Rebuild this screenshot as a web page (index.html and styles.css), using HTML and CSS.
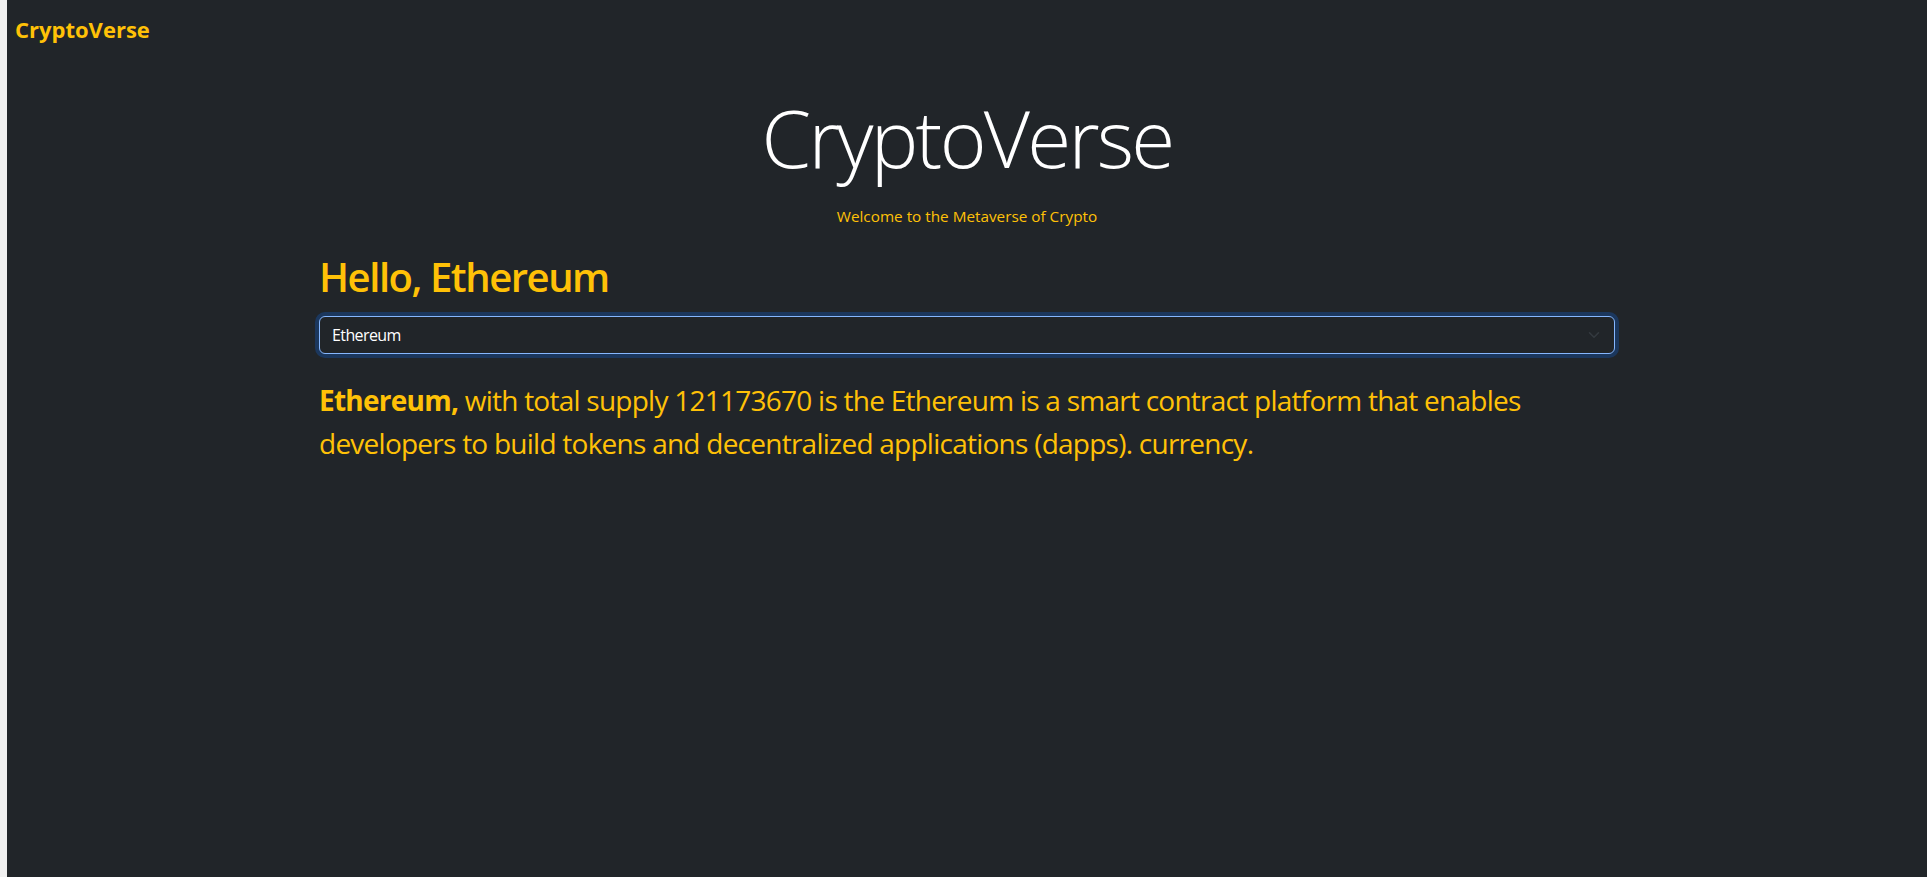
FILE: index.html
```html
<!DOCTYPE html>
<html lang="en">
<head>
<meta charset="utf-8">
<title>CryptoVerse</title>
<link rel="stylesheet" href="styles.css">
</head>
<body>
  <nav class="navbar">
    <a class="brand" href="#">CryptoVerse</a>
  </nav>
  <main class="container">
    <header class="hero">
      <h1 class="display">CryptoVerse</h1>
      <p class="tagline">Welcome to the Metaverse of Crypto</p>
    </header>
    <h2 class="hello">Hello, Ethereum</h2>
    <div class="select-wrap">
      <select class="form-select">
        <option>Ethereum</option>
      </select>
      <svg class="chevron" viewBox="0 0 16 16" width="16" height="12" aria-hidden="true">
        <path d="M2 5l6 6 6-6" fill="none" stroke="#343a40" stroke-width="2" stroke-linecap="round" stroke-linejoin="round"/>
      </svg>
    </div>
    <p class="desc"><strong>Ethereum,</strong> with total supply 121173670 is the Ethereum is a smart contract platform that enables developers to build tokens and decentralized applications (dapps). currency.</p>
  </main>
</body>
</html>
```
FILE: styles.css
```css
html {
  background: #f0f0f0;
}
body {
  margin: 0 0 0 7px;
  min-height: 100vh;
  background: #212529;
  font-family: "Open Sans", "Noto Sans", sans-serif;
  color: #ffc107;
}
.navbar {
  padding: 13px 8px 0;
}
.brand {
  display: inline-block;
  font-size: 22px;
  line-height: 33px;
  font-weight: 700;
  color: #ffc107;
  text-decoration: none;
}
.container {
  width: 1296px;
  margin: 0 auto;
  padding: 0 12px;
}
.hero {
  text-align: center;
  padding-top: 43px;
}
.display {
  margin: 0;
  font-size: 80px;
  line-height: 96px;
  font-weight: 300;
  letter-spacing: -2.75px;
  color: #ffffff;
}
.tagline {
  margin: 20px 0 0;
  font-size: 15.3px;
  line-height: 22px;
}
.hello {
  margin: 26px 0 0;
  font-size: 40px;
  line-height: 48px;
  font-weight: 600;
  letter-spacing: -1.45px;
}
.select-wrap {
  position: relative;
  margin-top: 15px;
}
.form-select {
  display: block;
  width: 100%;
  height: 38px;
  box-sizing: border-box;
  padding: 0 36px 0 12px;
  appearance: none;
  -webkit-appearance: none;
  background: #212529;
  color: #ffffff;
  font-family: inherit;
  font-size: 16px;
  letter-spacing: -0.6px;
  border: 1px solid #86b7fe;
  border-radius: 6px;
  box-shadow: 0 0 0 4px rgba(13, 110, 253, 0.25);
  outline: none;
}
.chevron {
  position: absolute;
  right: 13px;
  top: 13px;
  pointer-events: none;
}
.desc {
  margin: 25px 0 0;
  font-size: 28px;
  line-height: 42.5px;
  letter-spacing: -0.75px;
}
.desc strong {
  font-weight: 700;
}
```
